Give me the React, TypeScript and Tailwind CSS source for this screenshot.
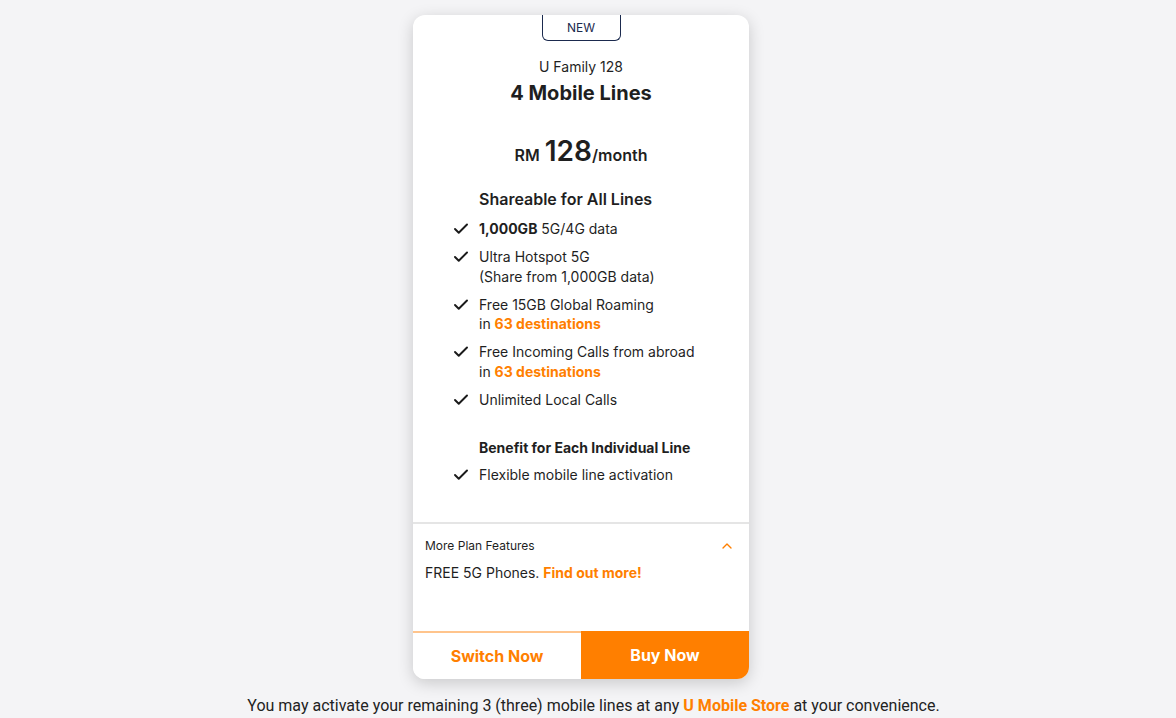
import { Check, ChevronUp } from "lucide-react";

const shareable = [
  { main: <><span className="font-bold">1,000GB</span> 5G/4G data</> },
  { main: <>Ultra Hotspot 5G<br />(Share from 1,000GB data)</> },
  {
    main: (
      <>
        Free 15GB Global Roaming
        <br />
        in <span className="font-bold text-[#ff7f00]">63 destinations</span>
      </>
    ),
  },
  {
    main: (
      <>
        Free Incoming Calls from abroad
        <br />
        in <span className="font-bold text-[#ff7f00]">63 destinations</span>
      </>
    ),
  },
  { main: <>Unlimited Local Calls</> },
];

function CheckItem({ children }: { children: React.ReactNode }) {
  return (
    <li className="flex items-start gap-[9px]">
      <Check className="w-[18px] h-[18px] mt-[1px] shrink-0 text-[#1a1a1a]" strokeWidth={2.6} />
      <span className="text-sm leading-[19.5px] text-[#1f1f1f]">{children}</span>
    </li>
  );
}

export default function App() {
  return (
    <div className="w-full min-h-[718px] bg-[#f4f4f6] flex flex-col items-center font-['Inter',sans-serif]">
      {/* Card */}
      <div className="mt-[15px] mr-[14px] w-[336px] bg-white rounded-xl shadow-[0_4px_16px_rgba(0,0,0,0.18)] flex flex-col overflow-hidden">
        <div className="flex justify-center">
          <div className="w-[79px] h-[26px] border border-t-0 border-[#1b2a4e] rounded-b-md flex items-center justify-center text-xs text-[#1b2a4e]">
            NEW
          </div>
        </div>

        <p className="mt-4 text-center text-sm leading-5 text-[#1f1f1f]">U Family 128</p>
        <h2 className="mt-[2px] text-center text-xl leading-7 font-bold text-[#1f1f1f]">
          4 Mobile Lines
        </h2>

        <div className="mt-[26px] flex items-baseline justify-center gap-[5px] text-[#1f1f1f]">
          <span className="text-base font-semibold">RM</span>
          <span className="text-[28px] leading-9 font-semibold">
            128<span className="text-base">/month</span>
          </span>
        </div>

        <div className="pl-[39px] pr-4 mt-[18px]">
          <h3 className="pl-[27px] text-base leading-6 font-semibold text-[#1f1f1f]">
            Shareable for All Lines
          </h3>
          <ul className="mt-2 flex flex-col gap-[8.5px]">
            {shareable.map((s, i) => (
              <CheckItem key={i}>{s.main}</CheckItem>
            ))}
          </ul>

          <h3 className="pl-[27px] mt-[29px] text-sm leading-5 font-bold text-[#1f1f1f]">
            Benefit for Each Individual Line
          </h3>
          <ul className="mt-[7px] flex flex-col gap-2">
            <CheckItem>Flexible mobile line activation</CheckItem>
          </ul>
        </div>

        <div className="mt-[37px] border-t-2 border-[#e5e5e5]" />

        <div className="px-3 pt-[14px] h-[107px]">
          <div className="flex items-center justify-between">
            <span className="text-xs leading-4 text-[#1f1f1f]">More Plan Features</span>
            <ChevronUp className="w-4 h-4 mr-[2px] text-[#ff7f00]" strokeWidth={2} />
          </div>
          <p className="mt-[9px] text-sm leading-5 text-[#1f1f1f]">
            FREE 5G Phones. <span className="font-bold text-[#ff7f00]">Find out more!</span>
          </p>
        </div>

        <div className="flex h-12">
          <button className="flex-1 border-t-2 border-[#ffc48c] bg-white text-base font-bold text-[#ff7f00]">
            Switch Now
          </button>
          <button className="flex-1 bg-[#ff7f00] text-base font-bold text-white">
            Buy Now
          </button>
        </div>
      </div>

      <p className="mt-[17px] ml-[11px] text-base leading-5 text-[#222] font-['Roboto',sans-serif]">
        You may activate your remaining 3 (three) mobile lines at any{" "}
        <span className="font-bold text-[#ff7f00]">U Mobile Store</span> at your convenience.
      </p>
    </div>
  );
}
